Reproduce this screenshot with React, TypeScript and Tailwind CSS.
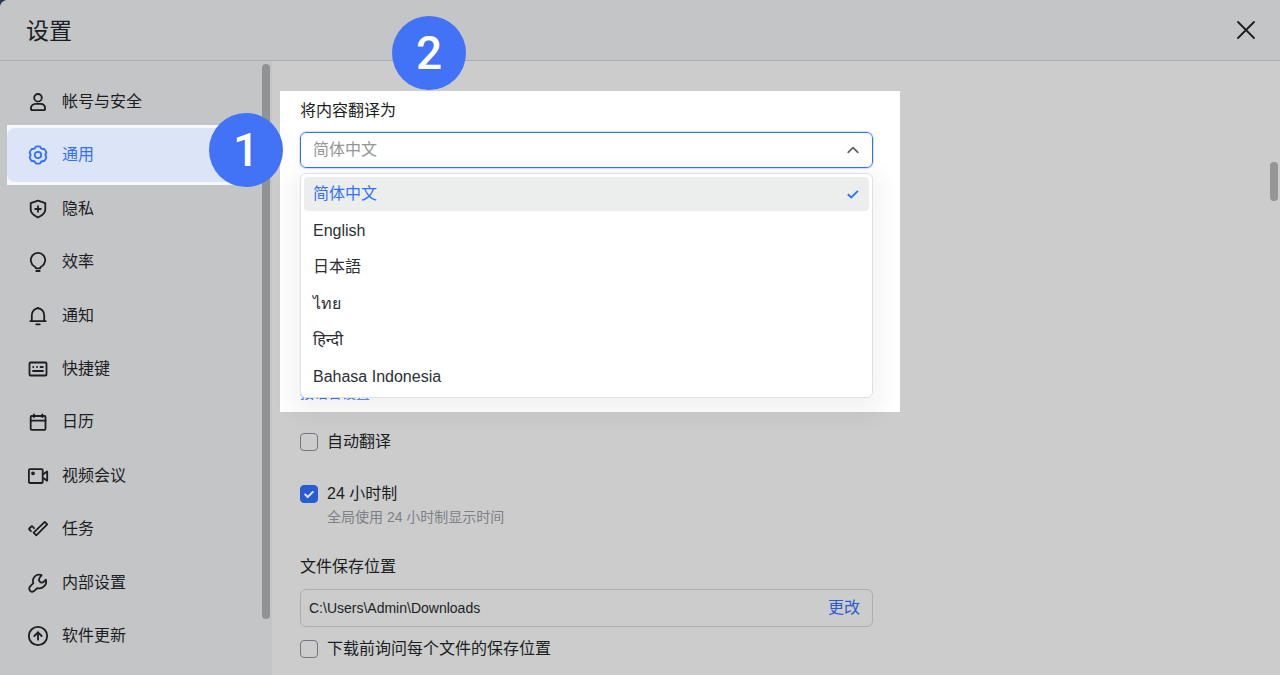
import { useState, type ReactNode } from "react";
import { CircleArrowUp } from "lucide-react";

function Glyph({ children }: { children: ReactNode }) {
  return (
    <svg
      viewBox="0 0 24 24"
      className="size-6"
      fill="none"
      stroke="currentColor"
      strokeWidth="1.8"
      strokeLinecap="round"
      strokeLinejoin="round"
      aria-hidden="true"
    >
      {children}
    </svg>
  );
}

const navItems: { label: string; icon: ReactNode }[] = [
  {
    label: "帐号与安全",
    icon: (
      <Glyph>
        <circle cx="12" cy="7.8" r="3.8" />
        <path d="M4.9 18.4c0-2.8 2-4.6 4.7-4.6h4.8c2.7 0 4.7 1.8 4.7 4.6 0 1.1-.6 1.7-1.6 1.7h-11c-1 0-1.6-.6-1.6-1.7z" />
      </Glyph>
    ),
  },
  {
    label: "通用",
    icon: (
      <Glyph>
        <path d="M9.8 3.7Q12 3.1 14.200 3.700Q15.100 6.500 18.100 5.900Q19.800 7.500 20.400 9.700Q18.400 12 20.400 14.300Q19.800 16.500 18.100 18.100Q15.100 17.500 14.200 20.300Q12 20.900 9.800 20.300Q8.900 17.500 5.900 18.100Q4.200 16.500 3.600 14.300Q5.600 12 3.600 9.700Q4.200 7.500 5.900 5.900Q8.900 6.500 9.800 3.700z" />
        <circle cx="12" cy="12" r="3.2" />
      </Glyph>
    ),
  },
  {
    label: "隐私",
    icon: (
      <Glyph>
        <path d="M12 3.6l7.3 2.6v6.2c0 3.9-3 6-7.3 8.1-4.3-2.1-7.3-4.2-7.3-8.1V6.2z" />
        <path d="M12 9.2v5.6M9.2 12h5.6" />
      </Glyph>
    ),
  },
  {
    label: "效率",
    icon: (
      <Glyph>
        <path d="M9.9 18.3c0-1.1-.6-1.5-1.7-2.1a7.200 7.200 0 1 1 7.600 0c-1.100.6-1.700 1-1.700 2.100zM10.300 21h3.400" />
      </Glyph>
    ),
  },
  {
    label: "通知",
    icon: (
      <Glyph>
        <path d="M5.800 17.200v-6a6.200 6.800 0 0 1 12.400 0v6M4.300 17.200h15.400M10.200 20.300h3.600M11.500 4h1" />
      </Glyph>
    ),
  },
  {
    label: "快捷键",
    icon: (
      <Glyph>
        <rect x="3.500" y="5.500" width="17" height="13" rx="1" />
        <path d="M7.200 10h.1M11 10h.1M14.600 10h2.200M7 14h10" />
      </Glyph>
    ),
  },
  {
    label: "日历",
    icon: (
      <Glyph>
        <rect x="4.700" y="6" width="14.800" height="13.800" rx="1" />
        <path d="M4.700 10.700h14.800M8 4.400V7M16.300 4.400V7" />
      </Glyph>
    ),
  },
  {
    label: "视频会议",
    icon: (
      <Glyph>
        <rect x="2.900" y="5.200" width="13.800" height="13.800" rx="1" />
        <circle cx="7" cy="9.300" r="1" fill="currentColor" />
        <path d="M17.500 10l3.700-2.500v9.200l-3.700-2.500" />
      </Glyph>
    ),
  },
  {
    label: "任务",
    icon: (
      <Glyph>
        <path d="M18.800 4.900l2.400 2.400-10.900 11-2.700-2.700zM8 11.200L6.500 9.500c-.4-.4-.8-.4-1.200 0l-2 2c-.3.3-.3.7 0 1l1.700 1.700" />
      </Glyph>
    ),
  },
  {
    label: "内部设置",
    icon: (
      <Glyph>
        <path d="M15.600 4.200C10.500 2.200 5.600 6.600 7.300 12.200L4.200 15.300c-1.300 1.300-1.300 3.300-.1 4.500s3.200 1.200 4.500-.1L11.200 17.100c5.300 1.300 10-3 8.700-8.500l-2.700 2.500c-.9.8-2.800.5-3.600-.6s-.8-2.600 0-3.700z" />
      </Glyph>
    ),
  },
  { label: "软件更新", icon: <CircleArrowUp size={22} strokeWidth={2} /> },
];

const languages = ["简体中文", "English", "日本語", "ไทย", "हिन्दी", "Bahasa Indonesia"];

function StepBadge({ value, place }: { value: number; place: string }) {
  return (
    <span
      className={`absolute z-20 flex size-[74px] items-center justify-center rounded-full bg-[#4273f6] font-['Roboto',sans-serif] text-[46px] leading-none font-medium text-white ${place}`}
    >
      {value}
    </span>
  );
}

function CheckRow({ label, initial = false }: { label: string; initial?: boolean }) {
  const [checked, setChecked] = useState(initial);
  return (
    <label className="flex h-6 items-center gap-[9px]">
      <span className="grid size-[18px] place-items-center">
        <input
          type="checkbox"
          checked={checked}
          onChange={(e) => setChecked(e.target.checked)}
          className="col-start-1 row-start-1 size-[18px] appearance-none rounded-[4px] border border-[#73777e] checked:border-[#295bd2] checked:bg-[#295bd2]"
        />
        {checked && (
          <svg
            viewBox="0 0 18 18"
            className="pointer-events-none col-start-1 row-start-1 size-[18px]"
            fill="none"
            stroke="#dde3f2"
            strokeWidth="2"
            aria-hidden="true"
          >
            <path d="M4.600 8.900l3.100 3.100 5.700-5.600" />
          </svg>
        )}
      </span>
      {label}
    </label>
  );
}

export default function App() {
  const [active, setActive] = useState("通用");
  const [language, setLanguage] = useState("简体中文");

  return (
    <div className="bg-[#2b3756] font-['Liberation_Sans','Noto_Sans_CJK_SC','Noto_Sans',sans-serif] text-base text-[#1b1e23]">
      <div className="flex min-h-screen flex-col rounded-tl-lg bg-[#cccccc]">
        <header className="flex h-[61px] items-center justify-between rounded-tl-lg border-b border-[#adaeb0] bg-[#c4c5c7] pr-5 pl-[26px]">
          <h1 className="pt-0.5 text-[23px] leading-8">设置</h1>
          <button type="button" aria-label="关闭" className="flex size-7 items-center justify-center">
            <svg viewBox="0 0 20 20" className="size-5" stroke="currentColor" strokeWidth="1.800" strokeLinecap="round" aria-hidden="true">
              <path d="M2 2l16 16M18 2L2 18" />
            </svg>
          </button>
        </header>

        <div className="flex flex-1">
          <nav className="relative flex w-[272px] shrink-0 flex-col bg-[#c4c5c7] pt-[14px] pb-3 pr-5 pl-[7px]">
            {navItems.map(({ label, icon }) => {
              const selected = label === active;
              return (
                <div key={label} className="relative flex min-h-12 flex-1 flex-col">
                  {selected && <span className="absolute inset-x-0 -inset-y-[3px] bg-[#f6f8fc]" />}
                  <button
                    type="button"
                    onClick={() => setActive(label)}
                    className={`relative flex flex-1 items-center gap-3 rounded-lg pl-[19px] text-left ${
                      selected ? "bg-[#dce5f8] text-[#3370ff]" : ""
                    }`}
                  >
                    <span className="flex size-6 items-center justify-center">{icon}</span>
                    {label}
                  </button>
                  {selected && <StepBadge value={1} place="top-[-15px] left-[202px]" />}
                </div>
              );
            })}
            <span className="absolute top-[3px] right-[2px] bottom-14 w-2 rounded-full bg-[#919294]" />
          </nav>

          <main className="relative min-w-0 flex-1 pl-2">
            <section className="relative mt-[30px] w-[620px] bg-white pt-2 pr-[27px] pb-[9px] pl-5">
              <StepBadge value={2} place="top-[-75px] left-[112px]" />
              <label htmlFor="language" className="block leading-6">
                将内容翻译为
              </label>
              <div className="relative mt-[9px]">
                <div className="flex h-9 items-center rounded-md border border-[#3370ff] pr-3 pl-3 outline outline-[#d6e2ff]">
                  <input
                    id="language"
                    role="combobox"
                    aria-expanded="true"
                    aria-controls="language-list"
                    placeholder={language}
                    className="min-w-0 flex-1 bg-transparent outline-none placeholder:text-[#949596]"
                  />
                  <svg viewBox="0 0 14 14" className="size-[14px]" fill="none" stroke="#5c6068" strokeWidth="1.700" strokeLinecap="round" strokeLinejoin="round" aria-hidden="true">
                    <path d="M2.200 9.400L7 4.600l4.800 4.800" />
                  </svg>
                </div>
                <ul
                  id="language-list"
                  role="listbox"
                  aria-label="将内容翻译为"
                  className="absolute inset-x-0 top-[41px] z-10 flex h-[225px] flex-col justify-between rounded-md border border-[#dee0e3] bg-white p-[3px] shadow-[0_8px_24px_8px_rgba(31,35,41,0.06)]"
                >
                  {languages.map((name) => (
                    <li
                      key={name}
                      role="option"
                      aria-selected={name === language}
                      onClick={() => setLanguage(name)}
                      className={`flex h-[34px] items-center justify-between rounded pr-[9px] pl-[9px] ${
                        name === language ? "bg-[#eceeee] text-[#3370ff]" : "text-[#2b2f36]"
                      }`}
                    >
                      {name}
                      {name === language && (
                        <svg viewBox="0 0 14 14" className="size-[14px]" fill="none" stroke="currentColor" strokeWidth="1.900" aria-hidden="true">
                          <path d="M1.800 7.200l3.500 3.300 6.600-6.600" />
                        </svg>
                      )}
                    </li>
                  ))}
                </ul>
              </div>
              <a href="#by-language" className="mt-[215px] block text-sm leading-5 text-[#3370ff]">
                按语言设置
              </a>
            </section>

            <section className="mt-[18px] w-[593px] pb-[14px] pl-5">
              <CheckRow label="自动翻译" />
              <div className="mt-7">
                <CheckRow label="24 小时制" initial />
                <p className="mt-px pl-[27px] text-sm leading-5 text-[#7c8087]">全局使用 24 小时制显示时间</p>
              </div>
              <label htmlFor="path" className="mt-7 block leading-6">
                文件保存位置
              </label>
              <div className="mt-[10px] flex h-[38px] items-center rounded-md border border-[#acadaf] pr-3 pl-2">
                <input
                  id="path"
                  readOnly
                  value="C:\Users\Admin\Downloads"
                  className="min-w-0 flex-1 bg-transparent text-sm outline-none"
                />
                <button type="button" className="text-[#295bd2]">
                  更改
                </button>
              </div>
              <div className="mt-[10px]">
                <CheckRow label="下载前询问每个文件的保存位置" />
              </div>
            </section>
            <span className="absolute top-[101px] right-[2px] h-[39px] w-2 rounded-full bg-[#949597]" />
          </main>
        </div>
      </div>
    </div>
  );
}
